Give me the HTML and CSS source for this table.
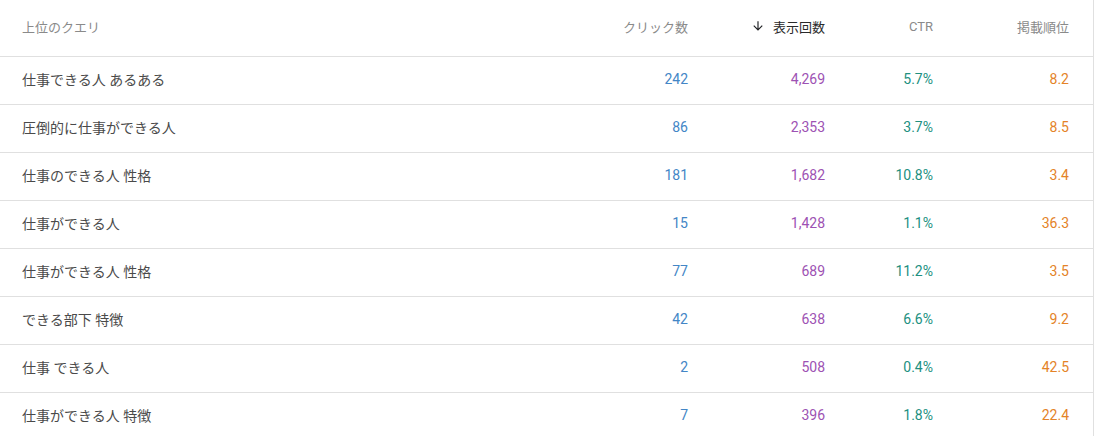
FILE: index.html
```html
<!DOCTYPE html>
<html lang="ja">
<head>
<meta charset="utf-8">
<link rel="stylesheet" href="styles.css">
</head>
<body>
<div class="table">
  <div class="row head">
    <div class="cell q">上位のクエリ</div>
    <div class="cell n">クリック数</div>
    <div class="cell n sorted"><svg class="arrow" viewBox="0 0 24 24" width="14" height="14"><path d="M20 12l-1.41-1.41L13 16.17V4h-2v12.17l-5.58-5.59L4 12l8 8 8-8z" fill="#202124"/></svg>表示回数</div>
    <div class="cell n">CTR</div>
    <div class="cell n">掲載順位</div>
  </div>
  <div class="row"><div class="cell q">仕事できる人 あるある</div><div class="cell n c">242</div><div class="cell n i">4,269</div><div class="cell n t">5.7%</div><div class="cell n p">8.2</div></div>
  <div class="row"><div class="cell q">圧倒的に仕事ができる人</div><div class="cell n c">86</div><div class="cell n i">2,353</div><div class="cell n t">3.7%</div><div class="cell n p">8.5</div></div>
  <div class="row"><div class="cell q">仕事のできる人 性格</div><div class="cell n c">181</div><div class="cell n i">1,682</div><div class="cell n t">10.8%</div><div class="cell n p">3.4</div></div>
  <div class="row"><div class="cell q">仕事ができる人</div><div class="cell n c">15</div><div class="cell n i">1,428</div><div class="cell n t">1.1%</div><div class="cell n p">36.3</div></div>
  <div class="row"><div class="cell q">仕事ができる人 性格</div><div class="cell n c">77</div><div class="cell n i">689</div><div class="cell n t">11.2%</div><div class="cell n p">3.5</div></div>
  <div class="row"><div class="cell q">できる部下 特徴</div><div class="cell n c">42</div><div class="cell n i">638</div><div class="cell n t">6.6%</div><div class="cell n p">9.2</div></div>
  <div class="row"><div class="cell q">仕事 できる人</div><div class="cell n c">2</div><div class="cell n i">508</div><div class="cell n t">0.4%</div><div class="cell n p">42.5</div></div>
  <div class="row last"><div class="cell q">仕事ができる人 特徴</div><div class="cell n c">7</div><div class="cell n i">396</div><div class="cell n t">1.8%</div><div class="cell n p">22.4</div></div>
</div>
</body>
</html>
```
FILE: styles.css
```css
html, body {
  margin: 0;
  padding: 0;
  background: #ffffff;
}
body {
  font-family: Roboto, "Noto Sans CJK JP", sans-serif;
  font-size: 14px;
  color: #4a4a4a;
}
.table {
  width: 1093px;
  height: 436px;
  border-right: 1px solid #e0e0e0;
  box-sizing: content-box;
  overflow: hidden;
}
.row {
  display: grid;
  grid-template-columns: 1fr 120px 137px 108px 136px;
  padding-right: 24px;
  padding-bottom: 4px;
  height: 48px;
  align-items: center;
  border-bottom: 1px solid #e0e0e0;
  box-sizing: border-box;
}
.row.head {
  height: 57px;
  font-size: 13px;
  color: #8a8a8a;
}
.row.last {
  border-bottom: none;
}
.cell.q {
  padding-left: 22px;
}
.cell.n {
  text-align: right;
}
.head .sorted {
  color: #2a2a2a;
  display: flex;
  justify-content: flex-end;
  align-items: center;
}
.arrow {
  margin-right: 8px;
}
.c { color: #4386c6; }
.i { color: #9d52b3; }
.t { color: #21907f; }
.p { color: #e48328; }
```
